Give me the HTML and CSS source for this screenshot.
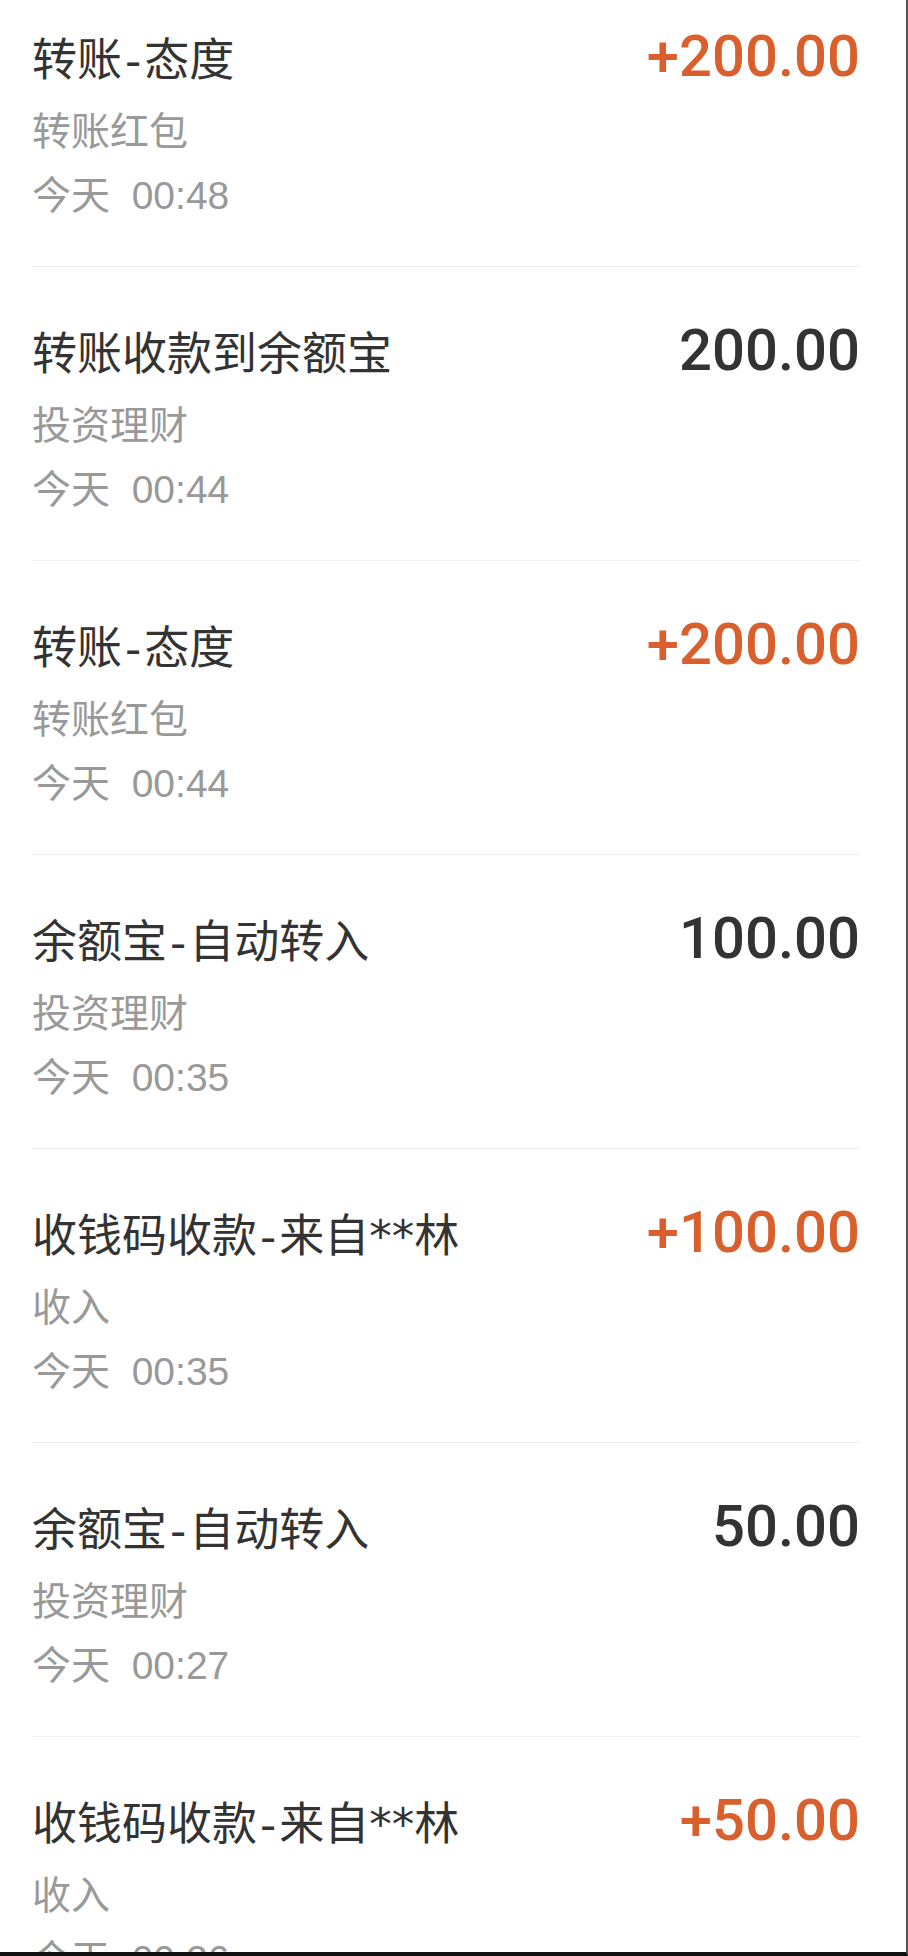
FILE: index.html
```html
<!DOCTYPE html>
<html lang="zh-CN">
<head>
  <meta charset="UTF-8" />
  <title>账单</title>
  <meta name="viewport" content="width=device-width, initial-scale=1.0" />
  <link rel="stylesheet" href="styles.css">
</head>
<body>
  <div class="screen">
    <ul class="bill-list">
      <li class="bill">
        <div class="bill-head">
          <div class="bill-title">转账<span class="dash">-</span>态度</div>
          <div class="bill-amount income">+200.00</div>
        </div>
        <div class="bill-type">转账红包</div>
        <div class="bill-time">今天  00:48</div>
      </li>
      <li class="bill">
        <div class="bill-head">
          <div class="bill-title">转账收款到余额宝</div>
          <div class="bill-amount">200.00</div>
        </div>
        <div class="bill-type">投资理财</div>
        <div class="bill-time">今天  00:44</div>
      </li>
      <li class="bill">
        <div class="bill-head">
          <div class="bill-title">转账<span class="dash">-</span>态度</div>
          <div class="bill-amount income">+200.00</div>
        </div>
        <div class="bill-type">转账红包</div>
        <div class="bill-time">今天  00:44</div>
      </li>
      <li class="bill">
        <div class="bill-head">
          <div class="bill-title">余额宝<span class="dash">-</span>自动转入</div>
          <div class="bill-amount">100.00</div>
        </div>
        <div class="bill-type">投资理财</div>
        <div class="bill-time">今天  00:35</div>
      </li>
      <li class="bill">
        <div class="bill-head">
          <div class="bill-title">收钱码收款<span class="dash">-</span>来自**林</div>
          <div class="bill-amount income">+100.00</div>
        </div>
        <div class="bill-type">收入</div>
        <div class="bill-time">今天  00:35</div>
      </li>
      <li class="bill">
        <div class="bill-head">
          <div class="bill-title">余额宝<span class="dash">-</span>自动转入</div>
          <div class="bill-amount">50.00</div>
        </div>
        <div class="bill-type">投资理财</div>
        <div class="bill-time">今天  00:27</div>
      </li>
      <li class="bill">
        <div class="bill-head">
          <div class="bill-title">收钱码收款<span class="dash">-</span>来自**林</div>
          <div class="bill-amount income">+50.00</div>
        </div>
        <div class="bill-type">收入</div>
        <div class="bill-time">今天  00:26</div>
      </li>
    </ul>
  </div>
</body>
</html>
```

FILE: styles.css
```css
* {
  box-sizing: border-box;
}

body {
  margin: 0;
  background: #fff;
  font-family: "Liberation Sans", "Noto Sans CJK SC", sans-serif;
}

.screen {
  width: 908px;
  height: 1956px;
  overflow: hidden;
  background: #fff;
  border-right: 2px solid #555;
  border-bottom: 4px solid #111;
  padding: 0 46px 0 32px;
}

.bill-list {
  list-style: none;
  margin: -27px 0 0;
  padding: 0;
}

.bill {
  padding: 52px 0 38px;
  border-bottom: 1px solid #efefef;
}

.bill-head {
  display: flex;
  justify-content: space-between;
  align-items: baseline;
}

.bill-title {
  font-family: "DejaVu Sans", "Noto Sans CJK SC", sans-serif;
  font-size: 45px;
  line-height: 62px;
  color: #333;
}

.bill-title .dash {
  margin: 0 3px;
}

.bill-amount {
  font-family: Roboto, sans-serif;
  font-weight: 500;
  font-size: 58px;
  line-height: 62px;
  color: #333;
}

.bill-amount.income {
  color: #d9602d;
}

.bill-type,
.bill-time {
  font-size: 39px;
  line-height: 64px;
  color: #999;
  white-space: pre;
}

.bill-type {
  margin-top: 8px;
}
```
